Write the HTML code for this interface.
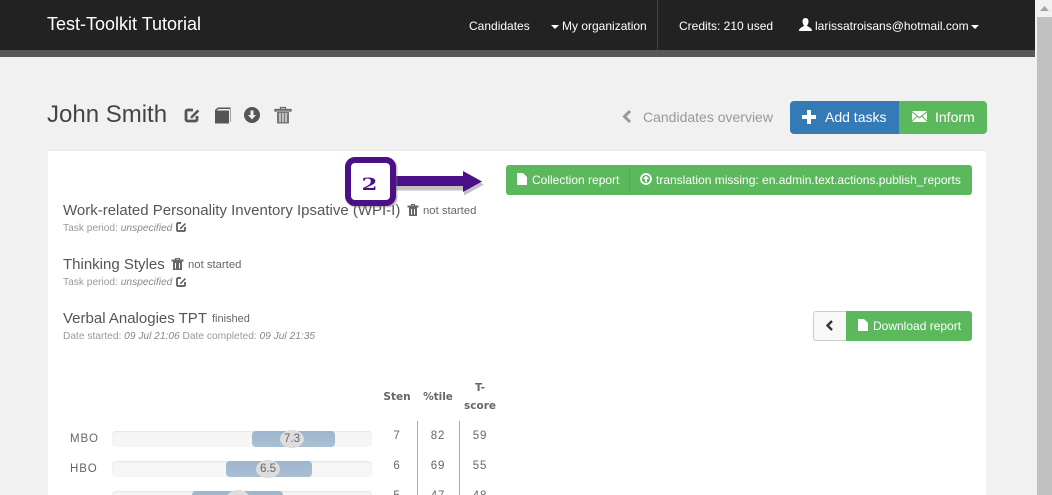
<!DOCTYPE html>
<html><head><meta charset="utf-8">
<style>
html,body{margin:0;padding:0;width:1052px;height:495px;overflow:hidden}
body{background:#f1f1f1;font-family:"Liberation Sans",sans-serif;color:#444}
#w{position:absolute;left:0;top:0;width:1052px;height:495px;overflow:hidden;background:#f1f1f1}
.a{position:absolute;white-space:nowrap;line-height:1}
svg{position:absolute;overflow:visible}
.nav{color:#fff;font-size:12px}
.h{font-size:15px;color:#555}
.st{font-size:11.300px;color:#666}
.sub{font-size:10.200px;color:#999}
.sub i{color:#888}
.btn{position:absolute;background:#5cb85c;color:#fff;font-size:12px}
.lbl{font-size:11.500px;color:#666;letter-spacing:.9px}
.track{position:absolute;left:112px;width:260px;height:16px;background:#f6f6f6;border-radius:4px;box-shadow:inset 0 1px 1px #e4e4e4}
.fill{position:absolute;height:16px;background:linear-gradient(#9db5cc,#a9bfd3);border-radius:4px}
.knob{position:absolute;width:24px;height:18px;border-radius:50%;background:#ddd;color:#666;font-size:11.500px;text-align:center;line-height:18px}
.num{font-size:11.500px;color:#666;text-align:center;width:40px;letter-spacing:.8px}
.th{font-family:"DejaVu Sans",sans-serif;font-size:10.500px;font-weight:bold;color:#666;text-align:center}
</style></head><body>
<div id="w">

<div class="a" style="left:0;top:0;width:1035px;height:50px;background:#222"></div>
<div class="a" style="left:0;top:50px;width:1035px;height:7px;background:#585858"></div>
<div class="a" style="left:657px;top:0;width:1px;height:50px;background:#444"></div>
<div class="a" style="left:47px;top:15px;font-size:18px;color:#fff">Test-Toolkit Tutorial</div>
<div class="a nav" style="left:469px;top:20px">Candidates</div>
<svg style="left:551px;top:25px" width="8" height="4"><path d="M0 0h8L4 4z" fill="#fff"/></svg>
<div class="a nav" style="left:562px;top:20px">My organization</div>
<div class="a nav" style="left:679px;top:20px">Credits: 210 used</div>
<svg style="left:799px;top:18px" width="13" height="14"><path d="M6.500 0C4.500 0 3.500 1.500 3.500 3.500S4.500 7 5 7.500C5 9 0 9 0 13h13c0-4-5-4-5-5.500C8.500 7 9.500 5.500 9.500 3.500S8.500 0 6.500 0z" fill="#fff"/></svg>
<div class="a nav" style="left:815px;top:20px">larissatroisans@hotmail.com</div>
<svg style="left:971px;top:25px" width="8" height="4"><path d="M0 0h8L4 4z" fill="#fff"/></svg>

<div class="a" style="left:1035px;top:0;width:17px;height:495px;background:#f1f1f1"></div>
<div class="a" style="left:1037px;top:17px;width:15px;height:478px;background:#c1c1c1"></div>
<svg style="left:1040px;top:6px" width="9" height="5"><path d="M4.500 0L9 5H0z" fill="#a3a3a3"/></svg>

<div class="a" style="left:47px;top:103px;font-size:24px;color:#444">John Smith</div>
<svg style="left:184px;top:107px" width="17" height="16"><path d="M9 3H3.500A1.500 1.500 0 0 0 2 4.500v8A1.500 1.500 0 0 0 3.500 14h8a1.500 1.500 0 0 0 1.500-1.500V9" fill="none" stroke="#555" stroke-width="2.800"/><path d="M6.500 9.500l7-7 1.800 1.800-7 7H6.500z" fill="#555"/></svg>
<svg style="left:215px;top:107px" width="16" height="17"><path d="M0 3L3 .5h12.500v14.500H15V2H3.500L1.500 3.500H14V16.500H0z" fill="#555"/></svg>
<svg style="left:244px;top:107px" width="16" height="16"><circle cx="8" cy="8" r="8" fill="#555"/><path d="M6.500 3.500h3V8H12L8 12.500 4 8h2.500z" fill="#f1f1f1"/></svg>
<svg style="left:275px;top:106px" width="16" height="18"><path d="M0 3.500h16v1.500H0zM5.500 3.500V1.500h5v2" fill="none" stroke="#666" stroke-width="1.300"/><path d="M2 6h12v11.500H2z" fill="#777"/><path d="M5 7v9M8 7v9M11 7v9" stroke="#f1f1f1" stroke-width="1.200"/></svg>

<svg style="left:622px;top:110px" width="10" height="13"><path d="M8 1L2.500 6.500 8 12" fill="none" stroke="#999" stroke-width="3"/></svg>
<div class="a" style="left:643px;top:110px;font-size:14px;color:#999">Candidates overview</div>
<div class="a" style="left:790px;top:101px;width:110px;height:33px;background:#337ab7;border-radius:4px 0 0 4px"></div>
<div class="a" style="left:899px;top:101px;width:88px;height:33px;background:#5cb85c;border-radius:0 4px 4px 0"></div>
<svg style="left:802px;top:110px" width="14" height="14"><path d="M5 0h4v5h5v4H9v5H5V9H0V5h5z" fill="#fff"/></svg>
<div class="a" style="left:825px;top:110px;font-size:14px;color:#fff">Add tasks</div>
<svg style="left:912px;top:111px" width="15" height="11"><path d="M0 0h15L7.500 6zM0 1.500V9.500L4.500 5zM15 1.500V9.500L10.500 5zM5.200 5.700L7.500 7.500l2.300-1.800L15 11H0z" fill="#fff"/></svg>
<div class="a" style="left:935px;top:110px;font-size:14px;color:#fff">Inform</div>

<div class="a" style="left:48px;top:150px;width:938px;height:345px;background:#fff;border-top:1px solid #e8e8e8;box-sizing:border-box"></div>

<div class="btn" style="left:506px;top:165px;width:466px;height:30px;border-radius:3px"></div>
<div class="a" style="left:629px;top:165px;width:1px;height:30px;background:#4cae4c"></div>
<svg style="left:517px;top:173px" width="10" height="12"><path d="M0 0h6l4 4v8H0z" fill="#fff"/></svg>
<div class="a" style="left:532px;top:174px;font-size:12px;color:#fff">Collection report</div>
<svg style="left:640px;top:173px" width="12" height="12"><circle cx="6" cy="6" r="5" fill="none" stroke="#fff" stroke-width="1.800"/><path d="M6 2.500L9 6H7v3H5V6H3z" fill="#fff"/></svg>
<div class="a" style="left:656px;top:174px;font-size:12px;color:#fff">translation missing: en.admin.text.actions.publish_reports</div>

<div class="a h" style="left:63px;top:203px">Work-related Personality Inventory Ipsative (WPI-I)</div>
<svg style="left:408px;top:204px" width="10" height="12"><path d="M0 2h10v1H0zM3.500 2V.5h3V2" fill="none" stroke="#666"/><path d="M1 3.500h8V12H1z" fill="#666"/><path d="M3.500 5v5.500M6.500 5v5.500" stroke="#fff"/></svg>
<div class="a st" style="left:423px;top:206px">not started</div>
<div class="a sub" style="left:63px;top:224px">Task period: <i>unspecified</i></div>
<svg style="left:176px;top:222px" width="10" height="10"><path d="M5 1H2a1 1 0 0 0-1 1v6a1 1 0 0 0 1 1h6a1 1 0 0 0 1-1V5" fill="none" stroke="#555" stroke-width="1.700"/><path d="M4 6l5-5 1 1-5 5H4z" fill="#555"/></svg>

<div class="a h" style="left:63px;top:257px">Thinking Styles</div>
<svg style="left:172px;top:258px" width="11" height="12"><path d="M0 2h11v1H0zM3.500 2V.5h4V2" fill="none" stroke="#666"/><path d="M1 3.500h9V12H1z" fill="#666"/><path d="M3.500 5v5.500M7.500 5v5.500" stroke="#fff"/></svg>
<div class="a st" style="left:188px;top:260px">not started</div>
<div class="a sub" style="left:63px;top:278px">Task period: <i>unspecified</i></div>
<svg style="left:176px;top:277px" width="10" height="10"><path d="M5 1H2a1 1 0 0 0-1 1v6a1 1 0 0 0 1 1h6a1 1 0 0 0 1-1V5" fill="none" stroke="#555" stroke-width="1.700"/><path d="M4 6l5-5 1 1-5 5H4z" fill="#555"/></svg>

<div class="a h" style="left:63px;top:311px">Verbal Analogies TPT</div>
<div class="a st" style="left:212px;top:314px;font-size:11px">finished</div>
<div class="a sub" style="left:63px;top:332px">Date started: <i>09 Jul 21:06</i> Date completed: <i>09 Jul 21:35</i></div>

<div class="a" style="left:813px;top:311px;width:32px;height:28px;background:#f8f8f8;border:1px solid #ccc;border-radius:3px 0 0 3px"></div>
<svg style="left:825px;top:320px" width="9" height="11"><path d="M7 1L2.500 5.500 7 10" fill="none" stroke="#333" stroke-width="2.400"/></svg>
<div class="btn" style="left:846px;top:311px;width:126px;height:30px;border-radius:0 3px 3px 0"></div>
<svg style="left:858px;top:319px" width="10" height="12"><path d="M0 0h6l4 4v8H0z" fill="#fff"/></svg>
<div class="a" style="left:873px;top:320px;font-size:12px;color:#fff">Download report</div>

<div class="a th" style="left:377px;top:392px;width:40px">Sten</div>
<div class="a th" style="left:418px;top:392px;width:40px">%tile</div>
<div class="a th" style="left:460px;top:379px;width:40px;line-height:18px">T-<br>score</div>

<div class="a" style="left:417px;top:421px;width:1px;height:74px;background:#aaa"></div>
<div class="a" style="left:459px;top:421px;width:1px;height:74px;background:#aaa"></div>

<div class="a lbl" style="left:70px;top:434px">MBO</div>
<div class="track" style="top:431px"></div>
<div class="fill" style="left:252px;top:431px;width:83px"></div>
<div class="knob" style="left:280px;top:430px">7.3</div>
<div class="a num" style="left:377px;top:431px">7</div>
<div class="a num" style="left:418px;top:431px">82</div>
<div class="a num" style="left:460px;top:431px">59</div>

<div class="a lbl" style="left:70px;top:464px">HBO</div>
<div class="track" style="top:461px"></div>
<div class="fill" style="left:226px;top:461px;width:86px"></div>
<div class="knob" style="left:256px;top:460px">6.5</div>
<div class="a num" style="left:377px;top:461px">6</div>
<div class="a num" style="left:418px;top:461px">69</div>
<div class="a num" style="left:460px;top:461px">55</div>

<div class="track" style="top:491px"></div>
<div class="fill" style="left:192px;top:491px;width:91px"></div>
<div class="knob" style="left:226px;top:490px"></div>
<div class="a num" style="left:377px;top:491px">5</div>
<div class="a num" style="left:418px;top:491px">47</div>
<div class="a num" style="left:460px;top:491px">48</div>

<svg style="left:345px;top:157px" width="140" height="52">
<path d="M48 21H118V16L138 26 118 37V32H48z" fill="#777" opacity=".45" transform="translate(1 1.500)"/>
<path d="M48 19H118V14L137 24.500 118 35V29H48z" fill="#4b0f87"/>
<rect x="3" y="3" width="45" height="43" rx="7" fill="none" stroke="#777" stroke-width="6" opacity=".45" transform="translate(1.500 1.500)"/>
<rect x="3" y="3" width="45" height="43" rx="7" fill="#fff" stroke="#4b0f87" stroke-width="6"/>
<text transform="translate(24.500 33) scale(1.350 1)" text-anchor="middle" font-family="DejaVu Serif,serif" font-weight="bold" font-size="17" fill="#4b0f87">2</text>
</svg>

</div>
</body></html>
